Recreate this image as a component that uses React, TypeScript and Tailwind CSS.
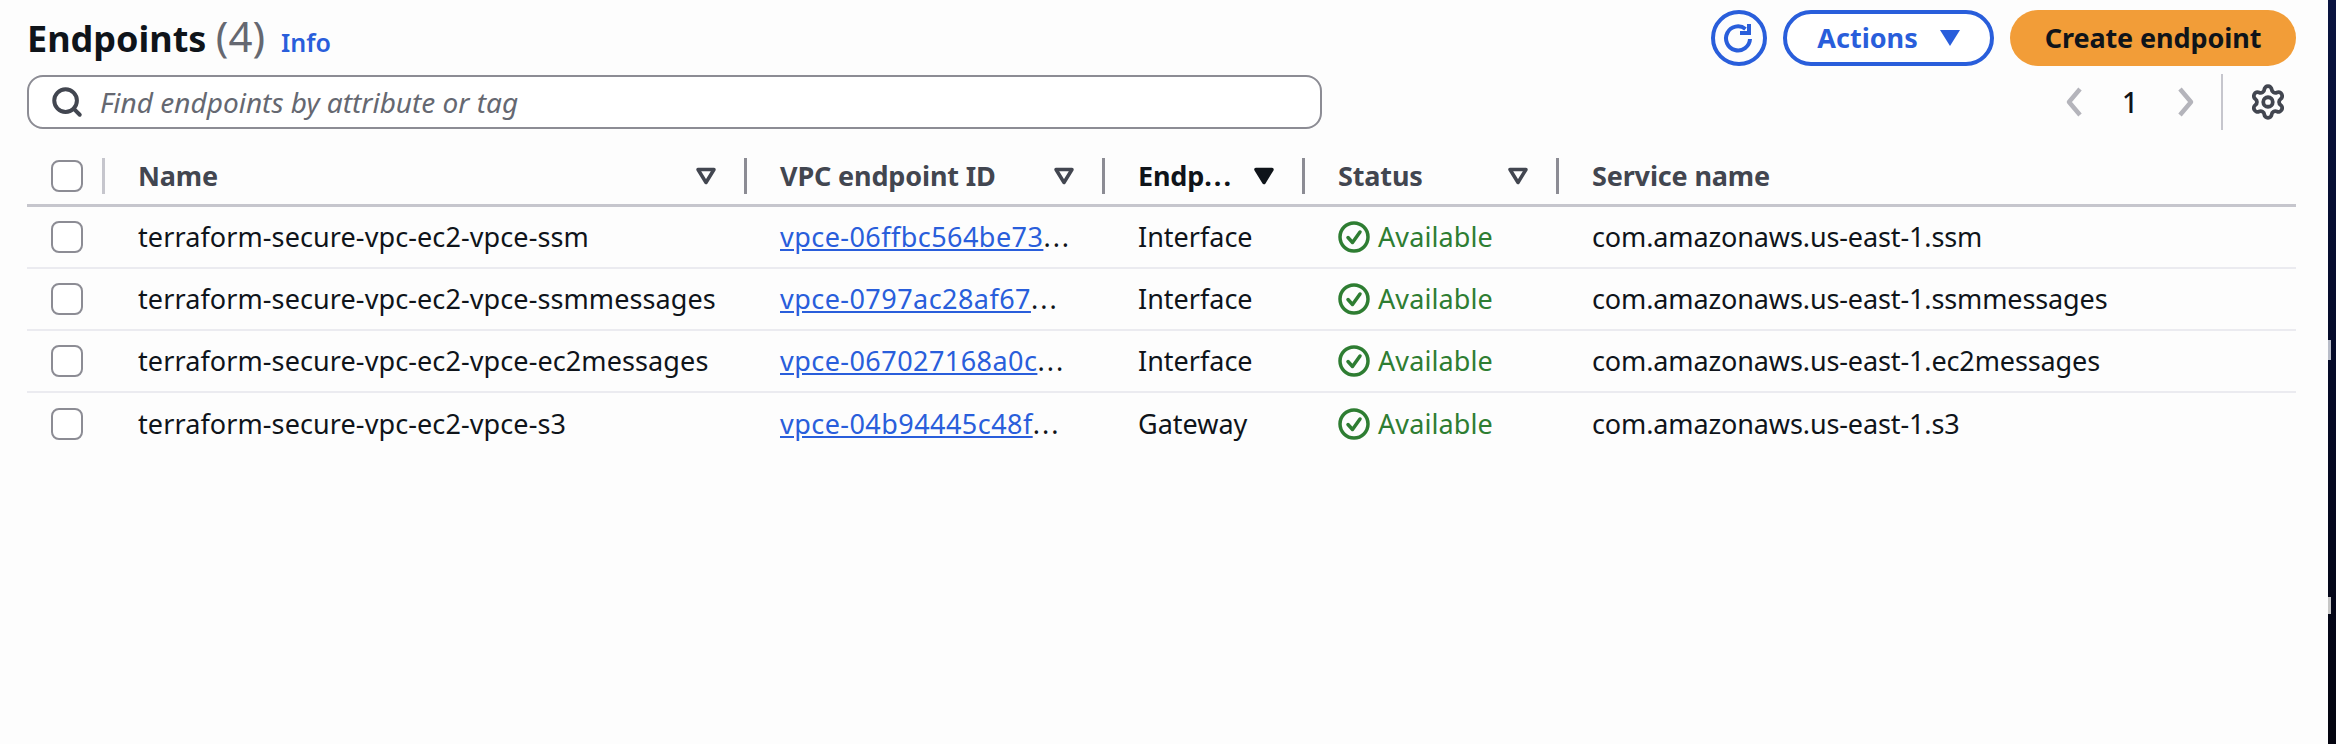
import { Search, Settings } from 'lucide-react'

const columns = 'grid grid-cols-[78px_642px_358px_200px_254px_1fr]'

const endpoints = [
  { name: 'terraform-secure-vpc-ec2-vpce-ssm', id: 'vpce-06ffbc564be73', type: 'Interface', service: 'com.amazonaws.us-east-1.ssm' },
  { name: 'terraform-secure-vpc-ec2-vpce-ssmmessages', id: 'vpce-0797ac28af67', type: 'Interface', service: 'com.amazonaws.us-east-1.ssmmessages' },
  { name: 'terraform-secure-vpc-ec2-vpce-ec2messages', id: 'vpce-067027168a0c', type: 'Interface', service: 'com.amazonaws.us-east-1.ec2messages' },
  { name: 'terraform-secure-vpc-ec2-vpce-s3', id: 'vpce-04b94445c48f', type: 'Gateway', service: 'com.amazonaws.us-east-1.s3' },
]

function Checkbox() {
  return <div className="ml-[24px] h-[32px] w-[32px] rounded-[8px] border-2 border-[#8c8c94] bg-white" />
}

function SortIcon({ active = false }: { active?: boolean }) {
  return (
    <svg width="22" height="18" viewBox="0 0 22 18" className="shrink-0">
      <path
        d="M3 2.5h16L11 15.5z"
        fill={active ? '#0f141a' : 'none'}
        stroke={active ? '#0f141a' : '#424650'}
        strokeWidth="3.5"
        strokeLinejoin="round"
      />
    </svg>
  )
}

function HeaderCell({ label, dots, active, sortable = true, last }: { label: string; dots?: boolean; active?: boolean; sortable?: boolean; last?: boolean }) {
  return (
    <div className="flex h-[36px] items-center">
      <span className={`pl-[33px] text-[27px] font-bold tracking-[-0.15px] ${active ? 'text-[#0f141a]' : 'text-[#424650]'}`}>
        {label}
        {dots && <span className="tracking-[2px]">...</span>}
      </span>
      {sortable && (
        <span className="ml-auto mr-[27px]">
          <SortIcon active={active} />
        </span>
      )}
      {!last && <span className="h-[36px] w-[3px] shrink-0 bg-[#8c8c94]" />}
    </div>
  )
}

function Chevron({ d }: { d: string }) {
  return (
    <svg width="18" height="30" viewBox="0 0 18 30" fill="none" stroke="#b4b4bb" strokeWidth="4.5" strokeLinejoin="round">
      <path d={d} />
    </svg>
  )
}

function StatusOk() {
  return (
    <div className="flex items-center gap-[8px] pl-[33px] text-[#2e7d32]">
      <svg width="32" height="32" viewBox="0 0 32 32" fill="none" stroke="currentColor" strokeWidth="3.5">
        <circle cx="16" cy="16" r="14" />
        <path d="M10 16.5l4.5 5L22 11" strokeLinecap="round" strokeLinejoin="round" />
      </svg>
      <span className="tracking-[0.1px]">Available</span>
    </div>
  )
}

export default function App() {
  return (
    <div className="flex h-[744px] bg-[#fdfdfd] font-['Noto_Sans',sans-serif] text-[27px] text-[#0f141a]">
      <main className="min-w-0 flex-1 pl-[27px] pr-[32px] pt-[10px]">
        {/* Title and actions */}
        <div className="flex h-[56px] items-center justify-between">
          <div className="flex items-baseline pb-[6px]">
            <h1 className="text-[36px] font-bold">
              Endpoints <span className="text-[42px] font-normal text-[#656871]">(4)</span>
            </h1>
            <a className="ml-[16px] text-[25px] font-semibold text-[#295edb]">Info</a>
          </div>
          <div className="flex items-center gap-[16px]">
            <button className="flex h-[56px] w-[56px] items-center justify-center rounded-full border-[4px] border-[#295edb] text-[#295edb]">
              <svg width="34" height="34" viewBox="0 0 34 34" fill="none" stroke="currentColor" strokeWidth="4">
                <path d="M28 18a12 12 0 1 1-4.5-10" />
                <path d="M27 3v9h-9" />
              </svg>
            </button>
            <button className="flex h-[56px] w-[211px] items-center justify-center gap-[22px] rounded-full border-[4px] border-[#295edb] bg-white font-bold text-[#295edb]">
              Actions
              <svg width="20" height="16" viewBox="0 0 20 16">
                <path d="M0 0h20L10 16z" fill="currentColor" />
              </svg>
            </button>
            <button className="h-[56px] w-[286px] rounded-full bg-[#f29d38] font-bold tracking-[-0.1px] text-[#0f141a]">Create endpoint</button>
          </div>
        </div>

        {/* Search and pagination */}
        <div className="mt-[8px] flex h-[56px] items-center justify-between">
          <div className="flex h-[54px] w-[1295px] items-center gap-[16px] rounded-[16px] border-2 border-[#8c8c94] bg-white pl-[21px]">
            <Search size={34} strokeWidth={2.8} className="text-[#424650]" />
            <span className="text-[28px] italic text-[#656871]">Find endpoints by attribute or tag</span>
          </div>
          <div className="flex items-center">
            <Chevron d="M15 2L4 15l11 13" />
            <span className="ml-[39px] w-[10px] text-center text-[28px] font-medium">1</span>
            <span className="ml-[45px]">
              <Chevron d="M3 2l11 13L3 28" />
            </span>
            <span className="ml-[26px] h-[56px] w-[2px] bg-[#c6c6cd]" />
            <Settings size={38} strokeWidth={2.4} className="ml-[26px] mr-[9px] text-[#424650]" />
          </div>
        </div>

        {/* Table */}
        <div className={`${columns} mt-[28px] h-[49px] border-b-[3px] border-[#c6c6cd]`}>
          <div className="flex h-[36px] items-center justify-between">
            <Checkbox />
            <span className="h-[36px] w-[3px] bg-[#c6c6cd]" />
          </div>
          <HeaderCell label="Name" />
          <HeaderCell label="VPC endpoint ID" />
          <HeaderCell label="Endp" dots active />
          <HeaderCell label="Status" />
          <HeaderCell label="Service name" sortable={false} last />
        </div>
        {endpoints.map((row, i) => (
          <div
            key={row.id}
            className={`${columns} h-[62px] items-center ${i < endpoints.length - 1 ? 'border-b-2 border-[#ebebf0]' : ''}`}
          >
            <Checkbox />
            <div className="pl-[33px] tracking-[0.1px]">{row.name}</div>
            <div className="pl-[33px]">
              <a className="tracking-[0.45px] text-[#295edb] underline">{row.id}</a>
              <span className="tracking-[2px]">...</span>
            </div>
            <div className="pl-[33px]">{row.type}</div>
            <StatusOk />
            <div className="pl-[33px] tracking-[-0.12px]">{row.service}</div>
          </div>
        ))}
      </main>
      <div className="relative w-[8px] bg-gradient-to-b from-[#0a1440] via-[#050a28] to-[#03040f]">
        <span className="absolute left-0 top-[340px] h-[20px] w-[3px] bg-[#b8bcc8]" />
        <span className="absolute left-0 top-[597px] h-[17px] w-[3px] bg-[#c6c6c6]" />
      </div>
    </div>
  )
}
